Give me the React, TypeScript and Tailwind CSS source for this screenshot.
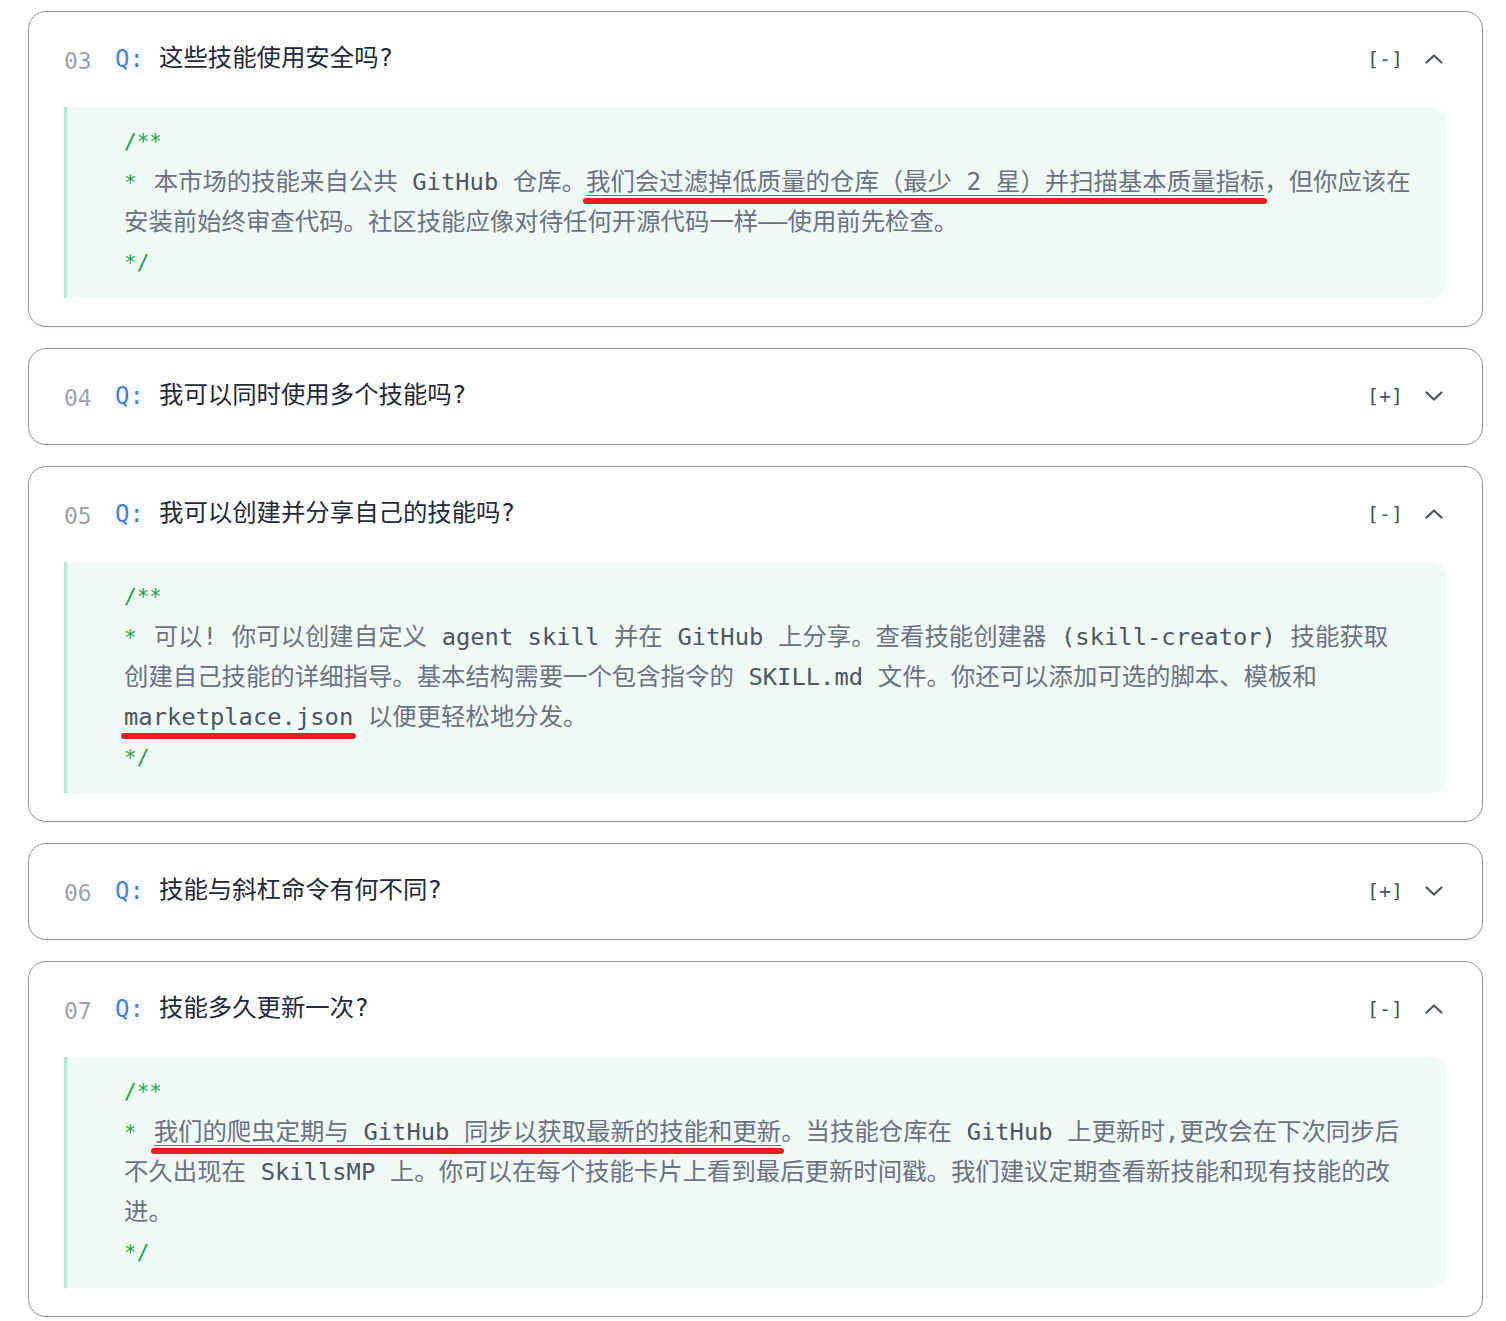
import { ReactNode } from 'react';

const MONO = "font-['DejaVu_Sans_Mono','Noto_Sans_CJK_SC',monospace]";

type Faq = {
  id: string;
  question: string;
  open: boolean;
  answer?: ReactNode;
};

// inline code token inside the comment block
function Code({ children }: { children: ReactNode }) {
  return <span className="text-[23.8px] leading-none text-[#4b5563]">{children}</span>;
}

// red hand-drawn marker under a phrase
function Marked({ children, thin = true }: { children: ReactNode; thin?: boolean }) {
  return (
    <span className="relative">
      <span className={thin ? 'underline decoration-[#6b7280] decoration-1 underline-offset-[5px]' : ''}>
        {children}
      </span>
      <span className="absolute left-[-3px] right-[-3px] top-[calc(100%+2px)] h-[6px] rounded-full bg-[#ec1c24]" />
    </span>
  );
}

const faqs: Faq[] = [
  {
    id: '03',
    question: '这些技能使用安全吗?',
    open: true,
    answer: (
      <>
        本市场的技能来自公共 <Code>GitHub</Code> 仓库。
        <Marked>我们会过滤掉低质量的仓库（最少 2 星）并扫描基本质量指标</Marked>
        ，但你应该在
        <br />
        安装前始终审查代码。社区技能应像对待任何开源代码一样——使用前先检查。
      </>
    ),
  },
  { id: '04', question: '我可以同时使用多个技能吗?', open: false },
  {
    id: '05',
    question: '我可以创建并分享自己的技能吗?',
    open: true,
    answer: (
      <>
        可以! 你可以创建自定义 <Code>agent skill</Code> 并在 <Code>GitHub</Code> 上分享。查看技能创建器{' '}
        <Code>(skill-creator)</Code> 技能获取
        <br />
        创建自己技能的详细指导。基本结构需要一个包含指令的 <Code>SKILL.md</Code> 文件。你还可以添加可选的脚本、模板和
        <br />
        <Marked thin={false}>
          <Code>marketplace.json</Code>
        </Marked>{' '}
        以便更轻松地分发。
      </>
    ),
  },
  { id: '06', question: '技能与斜杠命令有何不同?', open: false },
  {
    id: '07',
    question: '技能多久更新一次?',
    open: true,
    answer: (
      <>
        <Marked>
          我们的爬虫定期与 <Code>GitHub</Code> 同步以获取最新的技能和更新
        </Marked>
        。当技能仓库在 <Code>GitHub</Code> 上更新时,更改会在下次同步后
        <br />
        不久出现在 <Code>SkillsMP</Code> 上。你可以在每个技能卡片上看到最后更新时间戳。我们建议定期查看新技能和现有技能的改
        <br />
        进。
      </>
    ),
  },
];

function Chevron({ up }: { up: boolean }) {
  return (
    <svg width="18" height="10" viewBox="0 0 18 10" fill="none" stroke="#4b5563" strokeWidth="2.2" strokeLinecap="round" strokeLinejoin="round">
      <polyline points={up ? '1.5,8.5 9,1.5 16.5,8.5' : '1.5,1.5 9,8.5 16.5,1.5'} />
    </svg>
  );
}

function FaqCard({ faq }: { faq: Faq }) {
  return (
    <div className="rounded-[18px] border border-[#8f949e] bg-white shadow-[0_1px_2px_rgba(0,0,0,0.06)]">
      {/* Header */}
      <div className="flex h-[95px] items-center pl-[35px] pr-[39px] pb-[2px]">
        <span className="w-[51px] text-[23px] leading-none text-[#9ca3af] pt-[5px]">{faq.id}</span>
        <span className="w-[44px] text-[24px] leading-none font-medium text-[#3b82f6]">Q:</span>
        <span className="flex-1 text-[24.4px] leading-none text-[#1f2937]">{faq.question}</span>
        <span className="text-[20px] text-[#4b5563]">{faq.open ? '[-]' : '[+]'}</span>
        <span className="ml-[22px] flex items-center">
          <Chevron up={faq.open} />
        </span>
      </div>

      {/* Answer as a doc comment */}
      {faq.open && (
        <div className="px-[35px] pb-[28px]">
          <div className="rounded-r-2xl border-l-[3px] border-[#a7efc9] bg-[#f0fbf5] pb-[14px] pl-[57px] pr-[8px] pt-[15px] text-[24.4px] leading-[40px] text-[#6b7280]">
            <div className="text-[21px] text-[#16a34a]">/**</div>
            <p>
              <span className="pr-[17px] text-[21px] leading-none text-[#16a34a]">*</span>
              {faq.answer}
            </p>
            <div className="text-[21px] leading-[42px] text-[#16a34a]">*/</div>
          </div>
        </div>
      )}
    </div>
  );
}

export default function App() {
  return (
    <div className={`${MONO} bg-white min-h-screen pl-[28px] pr-[23px] pt-[11px] pb-[6px]`}>
      <div className="flex flex-col gap-[21px]">
        {faqs.map((faq) => (
          <FaqCard key={faq.id} faq={faq} />
        ))}
      </div>
    </div>
  );
}
